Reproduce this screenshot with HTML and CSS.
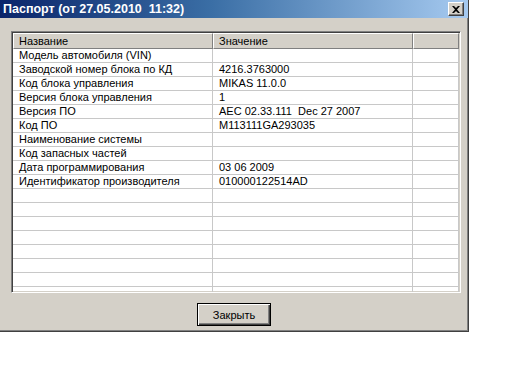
FILE: index.html
```html
<!DOCTYPE html>
<html lang="ru">
<head>
<meta charset="utf-8">
<title>Паспорт</title>
<link rel="stylesheet" href="styles.css">
</head>
<body>
<div class="window">
  <div class="titlebar">
    <span class="title">Паспорт (от 27.05.2010&nbsp; 11:32)</span>
    <span class="close"><svg width="8" height="7" viewBox="0 0 8 7"><path d="M0 0h2l2 2 2-2h2L5 3.5 8 7H6L4 5 2 7H0l3-3.5z" fill="#000"/></svg></span>
  </div>
  <div class="content">
    <div class="list">
      <div class="grid">
        <div class="hd">Название</div><div class="hd">Значение</div><div class="hd"></div>
        <div class="c">Модель автомобиля (VIN)</div><div class="c"></div><div class="c"></div>
        <div class="c">Заводской номер блока по КД</div><div class="c">4216.3763000</div><div class="c"></div>
        <div class="c">Код блока управления</div><div class="c">MIKAS 11.0.0</div><div class="c"></div>
        <div class="c">Версия блока управления</div><div class="c">1</div><div class="c"></div>
        <div class="c">Версия ПО</div><div class="c">AEC 02.33.111&nbsp; Dec 27 2007</div><div class="c"></div>
        <div class="c">Код ПО</div><div class="c">M113111GA293035</div><div class="c"></div>
        <div class="c">Наименование системы</div><div class="c"></div><div class="c"></div>
        <div class="c">Код запасных частей</div><div class="c"></div><div class="c"></div>
        <div class="c">Дата программирования</div><div class="c">03 06 2009</div><div class="c"></div>
        <div class="c">Идентификатор производителя</div><div class="c">010000122514AD</div><div class="c"></div>
        <div class="c"></div><div class="c"></div><div class="c"></div>
        <div class="c"></div><div class="c"></div><div class="c"></div>
        <div class="c"></div><div class="c"></div><div class="c"></div>
        <div class="c"></div><div class="c"></div><div class="c"></div>
        <div class="c"></div><div class="c"></div><div class="c"></div>
        <div class="c"></div><div class="c"></div><div class="c"></div>
        <div class="c"></div><div class="c"></div><div class="c"></div>
        <div class="c"></div><div class="c"></div><div class="c"></div>
      </div>
    </div>
    <div class="actions">
      <button class="btn">Закрыть</button>
    </div>
  </div>
</div>
</body>
</html>
```

FILE: styles.css
```css
html, body {
  margin: 0;
  padding: 0;
  background: #ffffff;
}
body {
  font-family: "Liberation Sans", Arial, sans-serif;
  font-size: 11px;
  color: #000;
}
.window {
  width: 468px;
  height: 331px;
  background: #d4d0c8;
  border-right: 1px solid #404040;
  border-bottom: 1px solid #404040;
  box-shadow: inset -1px -1px 0 #808080;
  display: flex;
  flex-direction: column;
}
.titlebar {
  height: 18px;
  background: linear-gradient(to right, #0a246a 0%, #3a6ea5 45%, #a6caf0 100%);
  display: flex;
  align-items: center;
  justify-content: space-between;
  padding: 0 4px 0 3px;
}
.title {
  color: #fff;
  font-weight: bold;
  font-size: 12.5px;
  white-space: pre;
}
.close {
  width: 16px;
  height: 14px;
  box-sizing: border-box;
  background: #d4d0c8;
  border-top: 1px solid #fff;
  border-left: 1px solid #fff;
  border-right: 1px solid #404040;
  border-bottom: 1px solid #404040;
  box-shadow: inset -1px -1px 0 #808080;
  display: flex;
  align-items: center;
  justify-content: center;
}
.content {
  flex: 1;
  display: flex;
  flex-direction: column;
  padding: 13px 7px 0 11px;
}
.list {
  width: 450px;
  height: 262px;
  box-sizing: border-box;
  border-top: 1px solid #808080;
  border-left: 1px solid #808080;
  border-right: 1px solid #fff;
  border-bottom: 1px solid #fff;
  box-shadow: inset 1px 1px 0 #404040, inset -1px -1px 0 #d4d0c8;
  padding: 1px;
  background: #fff;
  overflow: hidden;
}
.grid {
  display: grid;
  grid-template-columns: 200px 200px 46px;
  grid-template-rows: 16px;
  grid-auto-rows: 14px;
}
.hd {
  background: #d4d0c8;
  box-sizing: border-box;
  border-top: 1px solid #fff;
  border-left: 1px solid #fff;
  border-right: 1px solid #808080;
  border-bottom: 1px solid #808080;
  padding: 0 0 0 5px;
  line-height: 14px;
  white-space: nowrap;
  overflow: hidden;
}
.c {
  box-sizing: border-box;
  border-right: 1px solid #c8c8c8;
  border-bottom: 1px solid #c8c8c8;
  padding: 0 0 0 6px;
  line-height: 13px;
  white-space: nowrap;
  overflow: hidden;
}
.actions {
  display: flex;
  justify-content: center;
  padding-top: 10px;
  padding-right: 4px;
}
.btn {
  width: 74px;
  height: 23px;
  box-sizing: border-box;
  background: #d4d0c8;
  border: 1px solid #000;
  box-shadow: inset 1px 1px 0 #fff, inset -1px -1px 0 #404040, inset -2px -2px 0 #808080;
  font-family: "Liberation Sans", Arial, sans-serif;
  font-size: 11px;
  color: #000;
  padding: 0;
}
```
